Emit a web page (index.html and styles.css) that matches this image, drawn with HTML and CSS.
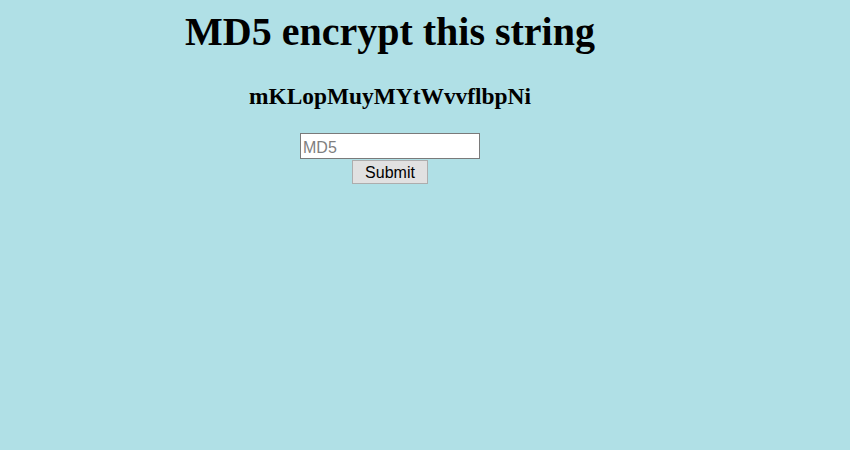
FILE: index.html
```html
<!DOCTYPE html>
<html>
<head>
<meta charset="utf-8">
<link rel="stylesheet" href="styles.css">
</head>
<body>
<div class="wrap">
  <h1 class="title">MD5 encrypt this string</h1>
  <h3 class="target">mKLopMuyMYtWvvflbpNi</h3>
  <form class="form">
    <input class="field" type="text" placeholder="MD5"><br>
    <button class="btn" type="button">Submit</button>
  </form>
</div>
</body>
</html>
```
FILE: styles.css
```css
html, body { background: #b0e0e6; }
body { margin: 8px; font-family: "Liberation Serif", serif; }
.wrap { width: 764px; text-align: center; }
.title { font-size: 40px; font-weight: bold; margin: 1px 0 0; line-height: 46px; }
.target { font-size: 23.4px; font-weight: bold; margin: 28px 0 0; line-height: 27px; }
.form { margin-top: 23px; line-height: 0; }
.field {
  width: 180px; height: 26px; box-sizing: border-box; margin: 0;
  border: 1px solid #7a7a7a; background: #fff; padding: 3px 2px 0;
  font: 16px "Liberation Sans", Arial, sans-serif; color: #000; vertical-align: top;
}
.field::placeholder { color: #7f7f7f; }
.btn {
  width: 76px; height: 24px; box-sizing: border-box; margin: 1px 0 0;
  border: 1px solid #adadad; background: #e1e1e1; padding: 2px 0 0;
  font: 16px "Liberation Sans", Arial, sans-serif; color: #000; vertical-align: top;
}
```
